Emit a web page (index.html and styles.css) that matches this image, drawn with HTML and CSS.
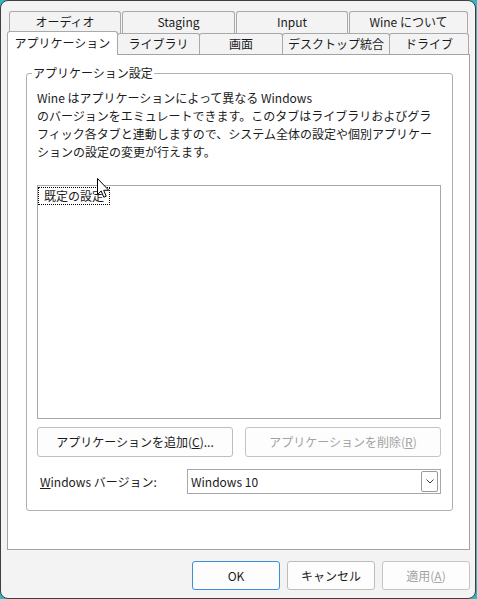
FILE: index.html
```html
<!DOCTYPE html>
<html lang="ja">
<head>
<meta charset="utf-8">
<title>Wine 設定</title>
<link rel="stylesheet" href="styles.css">
</head>
<body>
<div class="window">
  <div class="tabs">
    <div class="tab-row back">
      <div class="tab w1">オーディオ</div>
      <div class="tab w2">Staging</div>
      <div class="tab w3">Input</div>
      <div class="tab w4">Wine について</div>
    </div>
    <div class="tab-row front">
      <div class="tab selected f1">アプリケーション</div>
      <div class="tab f2">ライブラリ</div>
      <div class="tab f3">画面</div>
      <div class="tab f4">デスクトップ統合</div>
      <div class="tab f5">ドライブ</div>
    </div>
  </div>
  <div class="panel">
    <fieldset class="group">
      <legend>アプリケーション設定</legend>
      <p class="desc">Wine はアプリケーションによって異なる Windows<br>のバージョンをエミュレートできます。このタブはライブラリおよびグラ<br>フィック各タブと連動しますので、システム全体の設定や個別アプリケー<br>ションの設定の変更が行えます。</p>
      <div class="listbox">
        <span class="item">既定の設定</span>
      </div>
      <div class="btn-row">
        <button class="btn">アプリケーションを追加(<u>C</u>)...</button>
        <button class="btn disabled">アプリケーションを削除(<u>R</u>)</button>
      </div>
      <div class="combo-row">
        <span class="label"><u>W</u>indows バージョン:</span>
        <div class="combo">
          <span class="combo-text">Windows 10</span>
          <span class="combo-btn">
            <svg width="8" height="5" viewBox="0 0 8 5"><path d="M0.5 0.5 L4 4 L7.5 0.5" fill="none" stroke="#3a3a3a" stroke-width="1"/></svg>
          </span>
        </div>
      </div>
    </fieldset>
  </div>
  <div class="footer">
    <button class="btn fbtn default">OK</button>
    <button class="btn fbtn">キャンセル</button>
    <button class="btn fbtn disabled">適用(<u>A</u>)</button>
  </div>
  <svg class="cursor" width="14" height="21" viewBox="0 0 14 21">
    <path d="M0.5 0.5 L0.5 16.5 L4.2 13 L6.8 19.2 L9.2 18.2 L6.7 12.3 L11.8 12.3 Z" fill="#fff" stroke="#000" stroke-width="1" stroke-linejoin="round"/>
  </svg>
</div>
</body>
</html>
```
FILE: styles.css
```css
html, body {
  margin: 0;
  padding: 0;
}
body {
  background: #2fb7c4;
  width: 477px;
  height: 599px;
  overflow: hidden;
  font-family: "Noto Sans CJK JP", "Noto Sans", sans-serif;
  font-size: 12px;
  color: #1b1b1b;
}
.window {
  position: relative;
  box-sizing: border-box;
  width: 476px;
  height: 599px;
  border: 1px solid #3f3f3f;
  border-radius: 8px;
  background: #f3f3f3;
  padding: 10px 5px 0 6px;
}
.tabs {
  position: relative;
  z-index: 1;
}
.tab-row {
  display: flex;
  align-items: flex-end;
}
.tab-row.back {
  margin-left: 2px;
  gap: 1px;
  height: 22px;
}
.tab-row.front {
  height: 24px;
  margin-top: -2px;
  margin-bottom: -1px;
}
.tab {
  box-sizing: border-box;
  border: 1px solid #a9a9a9;
  border-bottom: none;
  border-radius: 3px 3px 0 0;
  background: #f3f3f3;
  display: flex;
  align-items: center;
  justify-content: center;
  white-space: nowrap;
  line-height: 16px;
}
.back .tab {
  height: 22px;
  padding-bottom: 1px;
}
.front .tab {
  height: 21px;
  margin-bottom: 1px;
  margin-left: -1px;
}
.front .tab.selected {
  height: 24px;
  margin-bottom: 0;
  margin-left: 0;
  background: #ffffff;
  padding-bottom: 2px;
  position: relative;
  z-index: 2;
}
.w1 { width: 112px; }
.w2 { width: 113px; }
.w3 { width: 112px; }
.w4 { width: 119px; }
.f1 { width: 111px; }
.f2 { width: 83px; }
.f3 { width: 84px; }
.f4 { width: 108px; }
.f5 { width: 80px; }

.panel {
  box-sizing: border-box;
  height: 496px;
  background: #ffffff;
  border: 1px solid #a3a3a3;
  padding: 9px 16px 0 18px;
}
.group {
  margin: 0;
  border: 1px solid #b0b0b0;
  border-radius: 3px;
  padding: 7px 11px 16px 10px;
  min-width: 0;
}
.group legend {
  margin-left: -5px;
  padding: 0 1px;
  line-height: 18px;
}
.desc {
  margin: 0;
  line-height: 18px;
  white-space: nowrap;
}
.listbox {
  box-sizing: border-box;
  margin-top: 24px;
  height: 234px;
  border: 1px solid #a8a8a8;
  background: #fff;
  padding-top: 1px;
}
.item {
  display: inline-block;
  box-sizing: border-box;
  height: 18px;
  line-height: 16px;
  padding: 0 5px;
  border: 1px dotted #000;
}
.btn-row {
  display: flex;
  gap: 12px;
  margin-top: 8px;
}
.btn {
  box-sizing: border-box;
  font-family: inherit;
  font-size: 12px;
  color: #1b1b1b;
  background: #fdfdfd;
  border: 1px solid #bdbdbd;
  border-radius: 3px;
  padding: 0;
  height: 30px;
  line-height: 16px;
}
.btn-row .btn {
  flex: 1;
}
.btn.disabled {
  color: #a3a3a3;
  border-color: #c4c4c4;
}
.combo-row {
  display: flex;
  align-items: center;
  margin-top: 12px;
}
.label {
  padding-left: 3px;
}
.combo {
  margin-left: auto;
  box-sizing: border-box;
  width: 254px;
  height: 25px;
  border: 1px solid #a8a8a8;
  background: #fff;
  display: flex;
  align-items: center;
  padding: 0 2px 0 3px;
}
.combo-text {
  flex: 1;
}
.combo-btn {
  box-sizing: border-box;
  width: 17px;
  height: 21px;
  border: 1px solid #9a9a9a;
  border-radius: 2px;
  display: flex;
  align-items: center;
  justify-content: center;
}
.footer {
  display: flex;
  justify-content: flex-end;
  gap: 7px;
  margin-top: 11px;
}
.fbtn {
  width: 88px;
  height: 29px;
}
.fbtn.default {
  border-color: #3c8fe0;
}
.cursor {
  position: absolute;
  left: 96px;
  top: 177px;
}
```
